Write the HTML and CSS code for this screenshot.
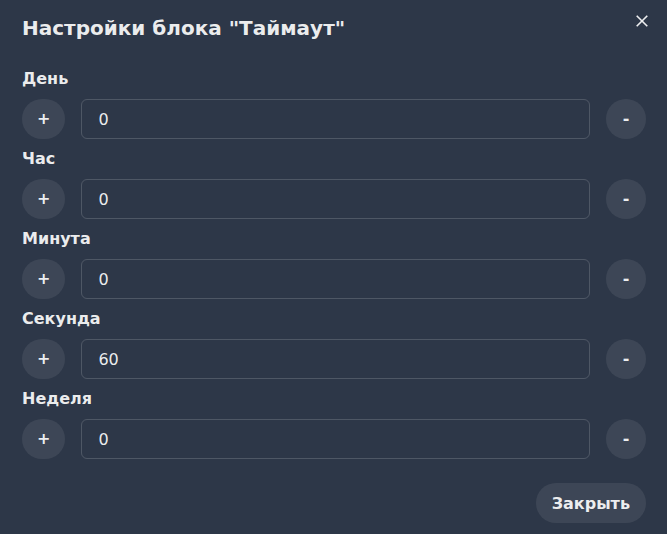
FILE: index.html
```html
<!DOCTYPE html>
<html lang="ru">
<head>
<meta charset="utf-8">
<title>Настройки блока "Таймаут"</title>
<link rel="stylesheet" href="styles.css">
</head>
<body>
<div class="modal">
  <header class="modal-header">
    <h2 class="modal-title">Настройки блока "Таймаут"</h2>
    <button class="close-btn" aria-label="Закрыть">
      <svg width="12" height="12" viewBox="0 0 12 12" aria-hidden="true">
        <path d="M0.7 0.7 L11.3 11.3 M11.3 0.7 L0.7 11.3" stroke="currentColor" stroke-width="1.6" fill="none"/>
      </svg>
    </button>
  </header>
  <div class="modal-body">
    <div class="field">
      <label class="field-label">День</label>
      <div class="field-row">
        <button class="round-btn">+</button>
        <input class="num-input" type="text" value="0">
        <button class="round-btn">-</button>
      </div>
    </div>
    <div class="field">
      <label class="field-label">Час</label>
      <div class="field-row">
        <button class="round-btn">+</button>
        <input class="num-input" type="text" value="0">
        <button class="round-btn">-</button>
      </div>
    </div>
    <div class="field">
      <label class="field-label">Минута</label>
      <div class="field-row">
        <button class="round-btn">+</button>
        <input class="num-input" type="text" value="0">
        <button class="round-btn">-</button>
      </div>
    </div>
    <div class="field">
      <label class="field-label">Секунда</label>
      <div class="field-row">
        <button class="round-btn">+</button>
        <input class="num-input" type="text" value="60">
        <button class="round-btn">-</button>
      </div>
    </div>
    <div class="field">
      <label class="field-label">Неделя</label>
      <div class="field-row">
        <button class="round-btn">+</button>
        <input class="num-input" type="text" value="0">
        <button class="round-btn">-</button>
      </div>
    </div>
  </div>
  <footer class="modal-footer">
    <button class="footer-btn">Закрыть</button>
  </footer>
</div>
</body>
</html>
```
FILE: styles.css
```css
html, body {
  margin: 0;
  padding: 0;
  background: #2d3748;
}
body {
  font-family: "DejaVu Sans", "Noto Sans", sans-serif;
  color: rgba(255, 255, 255, 0.92);
}
.modal {
  position: relative;
  height: 534px;
  overflow: hidden;
  padding: 16px 21px 0 22px;
  box-sizing: border-box;
}
.modal-header {
  display: block;
  padding-bottom: 16px;
}
.modal-title {
  margin: 0;
  font-size: 20px;
  line-height: 24px;
  font-weight: 700;
  color: rgba(255, 255, 255, 0.92);
}
.close-btn {
  position: absolute;
  top: 5px;
  right: 9px;
  width: 32px;
  height: 32px;
  padding: 0;
  border: none;
  background: transparent;
  color: rgba(255, 255, 255, 0.92);
  display: flex;
  align-items: center;
  justify-content: center;
  border-radius: 6px;
}
.modal-body {
  margin-top: 11px;
  display: flex;
  flex-direction: column;
  gap: 8px;
}
.field {
  display: flex;
  flex-direction: column;
}
.field-label {
  font-size: 16px;
  line-height: 24px;
  font-weight: 700;
  margin-bottom: 8px;
}
.field-row {
  display: flex;
  align-items: center;
  gap: 16px;
}
.round-btn {
  flex: none;
  min-width: 40px;
  height: 40px;
  padding: 0 15px;
  border: none;
  border-radius: 9999px;
  background: rgba(255, 255, 255, 0.08);
  color: rgba(255, 255, 255, 0.92);
  font-family: inherit;
  font-size: 16px;
  font-weight: 700;
  line-height: 1;
}
.num-input {
  flex: 1;
  min-width: 0;
  height: 40px;
  box-sizing: border-box;
  padding: 0 16px;
  border: 1px solid rgba(255, 255, 255, 0.16);
  border-radius: 6px;
  background: transparent;
  color: rgba(255, 255, 255, 0.92);
  font-family: inherit;
  font-size: 16px;
  outline: none;
}
.modal-footer {
  display: flex;
  justify-content: flex-end;
  margin-top: 24px;
}
.footer-btn {
  height: 40px;
  padding: 0 16px;
  border: none;
  border-radius: 9999px;
  background: rgba(255, 255, 255, 0.08);
  color: rgba(255, 255, 255, 0.92);
  font-family: inherit;
  font-size: 16px;
  font-weight: 700;
}
```
